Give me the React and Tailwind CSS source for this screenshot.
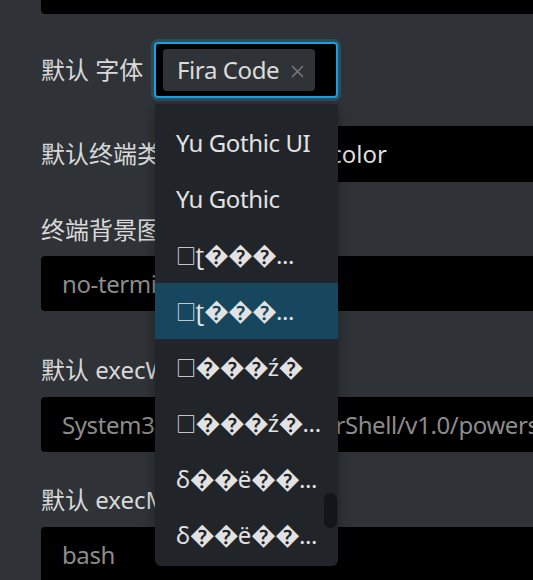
import React from "react";

const fontOptions = [
  "Yu Gothic UI",
  "Yu Gothic",
  "□ʈ\uFFFD\uFFFD\uFFFD...",
  "□ʈ\uFFFD\uFFFD\uFFFD...",
  "□\uFFFD\uFFFD\uFFFDź\uFFFD",
  "□\uFFFD\uFFFD\uFFFDź\uFFFD...",
  "δ\uFFFD\uFFFDë\uFFFD\uFFFD...",
  "δ\uFFFD\uFFFDë\uFFFD\uFFFD...",
];

// the broken font names: draw the replacement diamonds a bit bigger, like the reference
const OptionText = ({ text }) => {
  return (
    <span>
      {Array.from(text).map((ch, i) =>
        ch === "\uFFFD" ? (
          <span key={i} className="text-[25px] leading-none tracking-[-1px]">
            {ch}
          </span>
        ) : ch === "□" ? (
          <span key={i} className="text-[20px] leading-none">
            {ch}
          </span>
        ) : (
          ch
        )
      )}
    </span>
  );
};

const FontSelect = () => {
  return (
    <div className="relative w-[184px] shrink-0">
      <div className="flex h-[56px] items-center rounded-[4px] border-2 border-[#1c9ee0] bg-black pl-[7px] shadow-[0_0_0_3px_rgba(28,158,224,0.25)]">
        <div className="flex h-[42px] w-[152px] items-center justify-between rounded-[4px] bg-[#2f3337] pl-[14px] pr-[11px]">
          <span className="tracking-[-0.4px] text-[#dcdcdc]">Fira Code</span>
          <svg width="13" height="13" viewBox="0 0 13 13" className="mt-[2px]">
            <path d="M1 1L12 12M12 1L1 12" stroke="#7a7a7a" strokeWidth="1.5" />
          </svg>
        </div>
      </div>

      {/* open dropdown list */}
      <div className="absolute left-[1px] top-[62px] z-10 h-[462px] w-[183px] overflow-hidden rounded-b-[6px] rounded-t-[2px] bg-[#212429] pt-[11px] shadow-[0_4px_12px_rgba(0,0,0,0.35)]">
        {fontOptions.map((name, i) => (
          <div
            key={i}
            className={
              i === 3
                ? "flex h-[56px] items-center overflow-hidden whitespace-nowrap bg-[#17475f] pl-[21px] tracking-[-0.4px] text-[#e2e2e2]"
                : "flex h-[56px] items-center overflow-hidden whitespace-nowrap pl-[21px] tracking-[-0.4px] text-[#e2e2e2]"
            }
          >
            <OptionText text={name} />
          </div>
        ))}
        <div className="absolute right-[1px] top-[389px] h-[35px] w-[13px] rounded-full bg-[#141519]" />
      </div>
    </div>
  );
};

const App = () => {
  return (
    <div className="h-[580px] w-full overflow-hidden bg-[#2f3337] pl-[41px] font-['Noto_Sans','Noto_Sans_CJK_SC','DejaVu_Sans',sans-serif] text-[24px] text-[#d9d9d9]">
      <div className="h-[14px] rounded-bl-[4px] bg-black" />

      <div className="mt-[28px] flex h-[56px] items-center">
        <span className="w-[113px] shrink-0 whitespace-nowrap">默认 字体</span>
        <FontSelect />
      </div>

      <div className="mt-[28px] flex h-[56px] items-center">
        <span className="shrink-0 whitespace-nowrap">默认终端类型</span>
        <div className="ml-[8px] flex h-full flex-1 items-center whitespace-nowrap rounded-l-[4px] bg-black pl-[21px] text-[#dedede]">
          xterm-256color
        </div>
      </div>

      <div className="mt-[32px] leading-[32px]">终端背景图片</div>
      <div className="mt-[10px] flex h-[55px] items-center overflow-hidden whitespace-nowrap rounded-l-[4px] bg-black pl-[21px] tracking-[-0.4px] text-[#8c8c8c]">
        no-terminal-bg
      </div>

      <div className="mt-[43px] leading-[32px]">默认 execWindows</div>
      <div className="mt-[11px] flex h-[55px] items-center overflow-hidden whitespace-nowrap rounded-l-[4px] bg-black pl-[21px] tracking-[-0.4px] text-[#8c8c8c]">
        System32/WindowsPowerShell/v1.0/powershell.exe
      </div>

      <div className="mt-[32px] leading-[32px]">默认 execMac</div>
      <div className="mt-[11px] flex h-[56px] items-center overflow-hidden whitespace-nowrap rounded-l-[4px] bg-black pl-[21px] tracking-[-0.4px] text-[#8c8c8c]">
        bash
      </div>
    </div>
  );
};

export default App;
